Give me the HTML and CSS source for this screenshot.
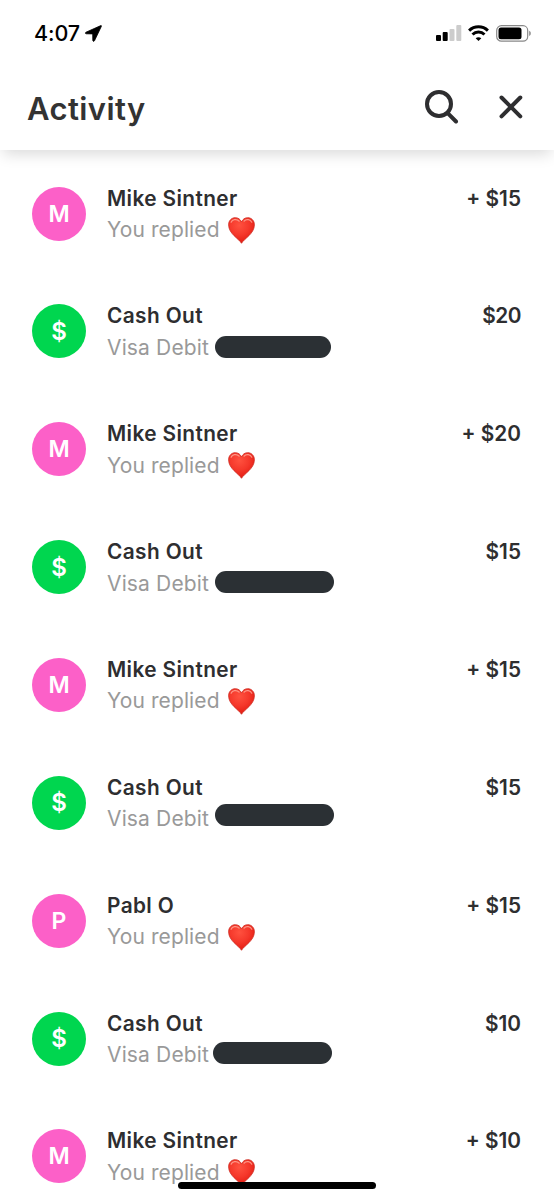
FILE: index.html
```
<!DOCTYPE html>
<html lang="en">
<head>
<meta charset="utf-8">
<title>Activity</title>
<link rel="stylesheet" href="styles.css">
</head>
<body>
<svg class="defs" aria-hidden="true">
  <defs>
    <radialGradient id="heartFill" cx=".42" cy=".3" r=".75">
      <stop offset="0" stop-color="#ff513f"/>
      <stop offset=".5" stop-color="#f5382b"/>
      <stop offset=".8" stop-color="#e92419"/>
      <stop offset="1" stop-color="#c91a14"/>
    </radialGradient>
    <symbol id="heart" viewBox="0 0 26 26">
      <path d="M13 25.3C10.500 20.800.600 16.200.600 7.500.600 3.300 3.500.700 7 .700c2.800 0 4.900 1.500 6 4.100C14.100 2.200 16.200.700 19 .700c3.500 0 6.400 2.600 6.400 6.800 0 8.700-9.900 13.300-12.400 17.800z" fill="url(#heartFill)" stroke="#cf2c22" stroke-width=".8"/>
      <path d="M3 5C4 2.500 8 1.500 10.700 4M15.500 4C17.700 1.500 21.700 2.400 22.900 5" fill="none" stroke="#ffb6a6" stroke-width="1.200" stroke-linecap="round" opacity=".75"/>
    </symbol>
  </defs>
</svg>
<div class="screen">
  <header class="header">
    <div class="status">
      <span class="time">4:07</span>
      <svg class="location" viewBox="0 0 17 17"><path d="M15.800.6 1 7.200c-.9.4-.7 1.600.3 1.600l6.400.1.100 6.500c0 1 1.200 1.300 1.700.3L16.400 1.300c.2-.5-.1-.9-.6-.7z"/></svg>
      <svg class="signal" viewBox="0 0 26 16"><rect x="0" y="10" width="5" height="6" rx="1"/><rect x="6.700" y="7" width="5" height="9" rx="1"/><g class="dim"><rect x="13.500" y="4" width="5" height="12" rx="1"/><rect x="20.300" y="0" width="5" height="16" rx="1"/></g></svg>
      <svg class="wifi" viewBox="0 0 21 16"><path d="M1.100 5.600a13.600 13.600 0 0 1 18.800 0M4.500 9.500a8.700 8.700 0 0 1 12 0"/><path class="dot" d="m10.500 16-2.800-2.800c1.400-1.300 4.200-1.300 5.600 0z"/></svg>
      <svg class="battery" viewBox="0 0 36 17"><rect class="shell" x=".7" y=".7" width="31" height="15.400" rx="4.700"/><rect x="2.500" y="2.500" width="23" height="11.800" rx="2.500"/><path class="tip" d="M33.200 5.800c2.100.7 2.100 4.500 0 5.200z"/></svg>
    </div>
    <div class="titlebar">
      <h1>Activity</h1>
      <svg class="search" viewBox="0 0 34 34"><circle cx="14" cy="14" r="12"/><path d="m22.700 23.200 8.300 8.300"/></svg>
      <svg class="close" viewBox="0 0 24 24"><path d="m2.500 2.500 18.800 18.800m0-18.800L2.500 21.300"/></svg>
    </div>
  </header>
  <main class="list">
    <div class="row"><span class="avatar">M</span><div class="info"><b>Mike Sintner</b><div class="sub"><span class="reply">You replied</span><svg class="heart"><use href="#heart"/></svg></div></div><span class="amount">+ $15</span></div>
    <div class="row"><span class="avatar cash">$</span><div class="info"><b>Cash Out</b><div class="sub"><span class="debit">Visa Debit</span><i class="mask mask-a"></i></div></div><span class="amount round">$20</span></div>
    <div class="row"><span class="avatar">M</span><div class="info"><b>Mike Sintner</b><div class="sub"><span class="reply">You replied</span><svg class="heart"><use href="#heart"/></svg></div></div><span class="amount">+ $20</span></div>
    <div class="row"><span class="avatar cash">$</span><div class="info"><b>Cash Out</b><div class="sub"><span class="debit">Visa Debit</span><i class="mask mask-b"></i></div></div><span class="amount">$15</span></div>
    <div class="row"><span class="avatar">M</span><div class="info"><b>Mike Sintner</b><div class="sub"><span class="reply">You replied</span><svg class="heart"><use href="#heart"/></svg></div></div><span class="amount">+ $15</span></div>
    <div class="row"><span class="avatar cash">$</span><div class="info"><b>Cash Out</b><div class="sub"><span class="debit">Visa Debit</span><i class="mask mask-c"></i></div></div><span class="amount">$15</span></div>
    <div class="row"><span class="avatar">P</span><div class="info"><b>Pabl O</b><div class="sub"><span class="reply">You replied</span><svg class="heart"><use href="#heart"/></svg></div></div><span class="amount">+ $15</span></div>
    <div class="row"><span class="avatar cash">$</span><div class="info"><b>Cash Out</b><div class="sub"><span class="debit">Visa Debit</span><i class="mask mask-d"></i></div></div><span class="amount">$10</span></div>
    <div class="row"><span class="avatar">M</span><div class="info"><b>Mike Sintner</b><div class="sub"><span class="reply">You replied</span><svg class="heart"><use href="#heart"/></svg></div></div><span class="amount">+ $10</span></div>
  </main>
  <div class="home"></div>
</div>
</body>
</html>
```
FILE: styles.css
```
* { box-sizing: border-box; }
body { margin: 0; background: #fff; font-family: Inter, "Liberation Sans", sans-serif; color: #2e2e30; }
.defs { position: absolute; width: 0; height: 0; }
.screen { position: relative; width: 554px; height: 1200px; overflow: hidden; }
.header { height: 150px; background: #fff; box-shadow: 0 7px 14px -3px rgba(0,0,0,.15); }
.status { display: flex; height: 66px; padding: 0 23px 0 34px; align-items: center; color: #000; }
.time { width: 47px; font-size: 21.500px; font-weight: 500; letter-spacing: -.1px; line-height: 66px; }
.location { width: 17px; height: 17px; margin-left: 4px; stroke: #000; stroke-width: .8; overflow: visible; }
.signal { width: 26px; height: 16px; margin-left: auto; }
.dim { fill: #ccc; }
.wifi { width: 21px; height: 16px; margin-left: 6px; fill: none; stroke: #000; stroke-width: 3; }
.wifi .dot { fill: #000; stroke: none; }
.battery { width: 36px; height: 17px; margin-left: 7px; margin-right: -1px; }
.shell { fill: none; stroke: #888; stroke-width: 1.200; }
.tip { fill: #888; }
.titlebar { display: flex; height: 84px; padding: 0 31px 2px 27px; align-items: center; }
h1 { margin: 2px auto 0 0; font-size: 31px; font-weight: 600; letter-spacing: .4px; color: #333; }
.search, .close { fill: none; stroke: #2e2e30; stroke-width: 4; stroke-linecap: round; }
.search { width: 34px; height: 34px; margin-right: 40px; }
.close { width: 24px; height: 24px; }
.list { display: grid; grid-auto-rows: 117.850px; padding: 4.600px 33px 0 32px; }
.row { display: flex; padding-top: 32px; }
.avatar { display: flex; width: 54px; height: 54px; border-radius: 50%; background: #fc60c8; color: #fff; align-items: center; justify-content: center; font-size: 23px; font-weight: 600; }
.cash { background: #00d64f; font-size: 24px; }
.info { flex: 1; padding-left: 21px; }
.info b { display: block; height: 28px; margin-top: -2px; line-height: 28px; font-size: 20.800px; font-weight: 600; letter-spacing: .4px; }
.sub { display: flex; height: 32px; margin-top: 1.500px; align-items: center; font-size: 21px; font-weight: 400; line-height: 32px; color: #999; white-space: nowrap; }
.reply { width: 121px; letter-spacing: .1px; }
.debit { width: 108px; letter-spacing: .15px; }
.heart { width: 27px; height: 27px; }
.mask { width: 119px; height: 22px; border-radius: 11px; background: #2b3034; }
.mask-a { width: 116px; margin-top: -1px; }
.mask-b { margin-top: -4px; }
.mask-c { margin-top: -9px; }
.mask-d { margin-left: -2px; margin-top: -5px; }
.amount { height: 28px; margin-top: -2px; line-height: 28px; font-size: 20.800px; font-weight: 600; }
.round { letter-spacing: -.5px; }
.home { position: absolute; left: 178px; top: 1182px; width: 198px; height: 7px; border-radius: 4px; background: #000; }
```
